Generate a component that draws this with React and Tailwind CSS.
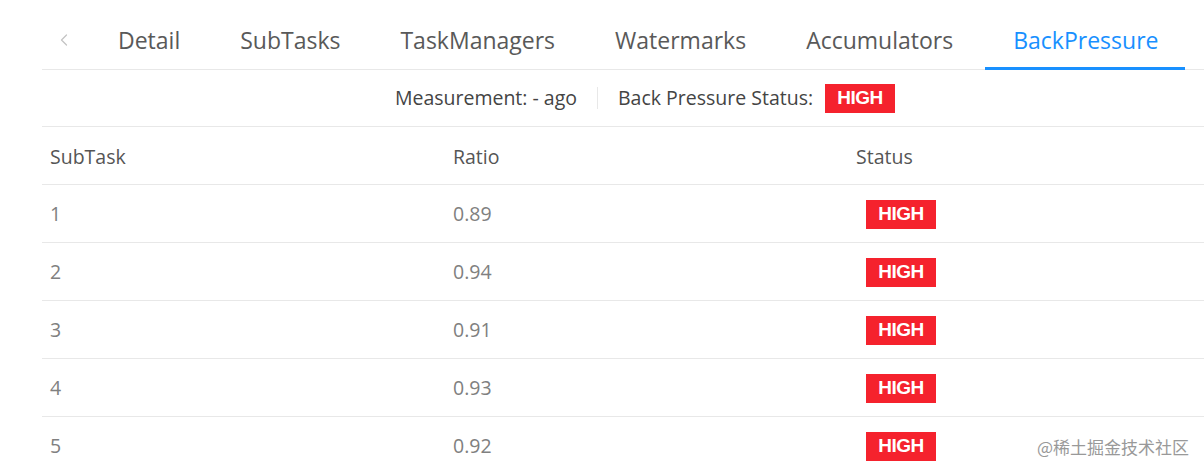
import { ChevronLeft } from 'lucide-react';

const tabs = ['Detail', 'SubTasks', 'TaskManagers', 'Watermarks', 'Accumulators', 'BackPressure'];

const rows = [
  { id: 1, ratio: '0.89' },
  { id: 2, ratio: '0.94' },
  { id: 3, ratio: '0.91' },
  { id: 4, ratio: '0.93' },
  { id: 5, ratio: '0.92' },
];

const Badge = () => (
  <span className="inline-flex items-center justify-center w-[70px] h-[29px] bg-[#f5222d] text-white text-[19px] font-bold tracking-tight font-['Liberation_Sans',sans-serif]">
    HIGH
  </span>
);

export default function App() {
  return (
    <div className="w-[1204px] h-[474px] overflow-hidden bg-white font-['Open_Sans',sans-serif] relative">
      <div className="ml-[42px] w-[1206px]">
        {/* Tabs */}
        <div className="flex h-[70px] border-b border-[#e8e8e8]">
          <div className="w-[46px] h-full flex items-center pt-[10px] pl-[12px] text-[#c4c4c4]">
            <ChevronLeft size={20} strokeWidth={1.5} />
          </div>
          {tabs.map((t) => {
            const active = t === 'BackPressure';
            return (
              <div
                key={t}
                className={`relative h-full flex items-center pt-[11px] px-[30px] text-[23px] ${
                  active ? 'text-[#1890ff] font-medium' : 'text-[#595959]'
                }`}
              >
                {t}
                {active && <div className="absolute left-[2px] right-[3px] bottom-[-1px] h-[3px] bg-[#1890ff]" />}
              </div>
            );
          })}
        </div>

        {/* Measurement bar */}
        <div className="flex items-center justify-center h-[57px] border-b border-[#e8e8e8] text-[19.5px] text-[#444]">
          <span className="pr-[20px]">Measurement: - ago</span>
          <span className="w-px h-[22px] bg-[#e8e8e8]" />
          <span className="pl-[20px] pr-[12px]">Back Pressure Status:</span>
          <Badge />
        </div>

        {/* Table */}
        <div className="grid grid-cols-[403px_403px_1fr] h-[58px] items-center pt-[2px] border-b border-[#e8e8e8] text-[19.5px] text-[#555]">
          <div className="pl-[8px]">SubTask</div>
          <div className="pl-[8px]">Ratio</div>
          <div className="pl-[8px]">Status</div>
        </div>
        {rows.map((r) => (
          <div
            key={r.id}
            className="grid grid-cols-[403px_403px_1fr] h-[58px] items-center border-b border-[#e8e8e8] text-[19.5px] text-[#808080]"
          >
            <div className="pl-[8px]">{r.id}</div>
            <div className="pl-[8px]">{r.ratio}</div>
            <div className="pl-[18px]">
              <Badge />
            </div>
          </div>
        ))}
      </div>

      <div className="absolute left-[1037px] top-[434px] text-[17px] text-[#999] font-['Noto_Sans_CJK_SC',sans-serif]">
        @稀土掘金技术社区
      </div>
    </div>
  );
}
